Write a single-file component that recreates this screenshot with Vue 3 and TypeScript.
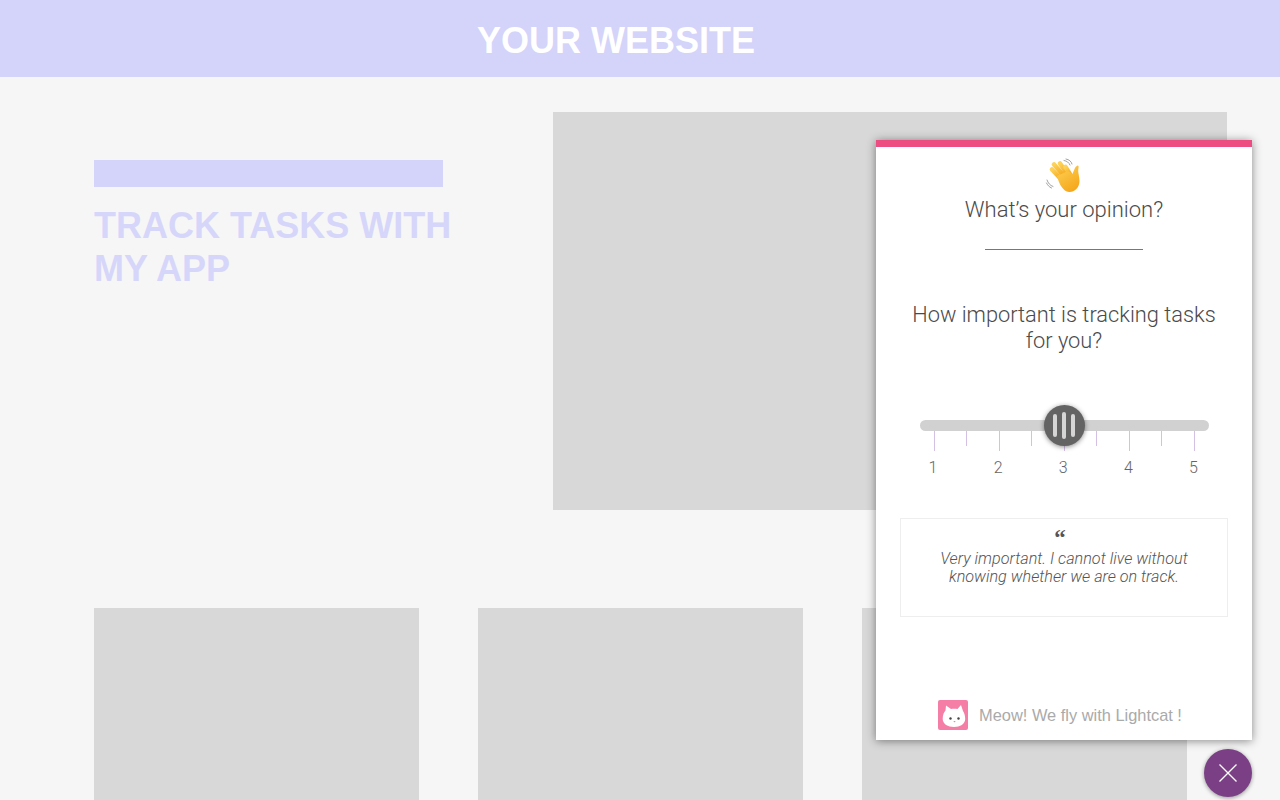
<script setup lang="ts">
const ticks: { major: boolean }[] = [
  { major: true }, { major: false }, { major: true }, { major: false }, { major: true },
  { major: false }, { major: true }, { major: false }, { major: true },
]
const labels: number[] = [1, 2, 3, 4, 5]
const cards: number[] = [1, 2, 3]
</script>

<template>
  <div class="page">
    <header class="site-header">YOUR WEBSITE</header>
    <main class="content">
      <section class="hero">
        <div class="hero-copy">
          <div class="hero-bar"></div>
          <h1 class="hero-title">TRACK TASKS WITH MY APP</h1>
        </div>
        <div class="hero-image"></div>
      </section>
      <section class="cards">
        <div v-for="c in cards" :key="c" class="card"></div>
      </section>
    </main>

    <aside class="panel">
      <div class="panel-stripe"></div>
      <svg class="wave" viewBox="0 0 40 40" width="40" height="40" aria-hidden="true">
        <defs>
          <linearGradient id="hand" x1="0" y1="0" x2="0.6" y2="1">
            <stop offset="0" stop-color="#fdd257" />
            <stop offset="1" stop-color="#f6a81c" />
          </linearGradient>
        </defs>
        <g fill="none" stroke="#8a8a8a" stroke-width="0.8" stroke-linecap="round">
          <path d="M20 4.500 C23 5 25 6.500 26 9" />
          <path d="M22 3 C25 3.500 27.500 5.500 28 8" />
          <path d="M3 24 C4 27 6 29.500 9 30.500" />
          <path d="M2.500 27 C3.500 29 5 31 7.500 32" />
        </g>
        <g fill="none" stroke="url(#hand)" stroke-width="4.600" stroke-linecap="round">
          <path d="M8 13.500 L18 24" />
          <path d="M10 8.500 L21 21" />
          <path d="M16 7.500 L24 19" />
          <path d="M21.500 11 L27 20" />
        </g>
        <path d="M13 20 L24 15 L28.500 18 C30 15 30.500 11 33.500 9.500 C35 9.500 34.800 11.500 34.300 13 C33.600 16 35.500 20 35.500 25 C35.500 32 30 36.500 25 36 C19 35.500 15 28 13 20 Z" fill="url(#hand)" />
      </svg>
      <h2 class="panel-title">What’s your opinion?</h2>
      <div class="panel-rule"></div>
      <p class="question">How important is tracking tasks for you?</p>

      <div class="slider">
        <div class="track"></div>
        <div class="ticks">
          <span v-for="(t, i) in ticks" :key="i" class="tick" :class="{ major: t.major }"></span>
        </div>
        <div class="labels">
          <span v-for="n in labels" :key="n" class="label">{{ n }}</span>
        </div>
        <div class="thumb">
          <span class="grip side"></span>
          <span class="grip"></span>
          <span class="grip side"></span>
        </div>
      </div>

      <div class="quote">
        <div class="quote-mark">“</div>
        <p class="quote-text">Very important. I cannot live without knowing whether we are on track.</p>
      </div>

      <footer class="brand">
        <span class="brand-logo">
          <svg viewBox="0 0 30 30" width="30" height="30" aria-hidden="true">
            <path d="M4.700 19 C4.700 15 6 12 7.500 10.500 L8 5.500 L13 9 C15 8.700 17.500 8.700 19.500 9 L23 5 L25 11 C26.500 13 27.200 16 27.200 19 C27.200 24 22 27 16 27 C10 27 4.700 24 4.700 19 Z" fill="#fff" />
            <circle cx="12.500" cy="18.500" r="1.200" fill="#444" />
            <circle cx="20.500" cy="18.500" r="1.200" fill="#444" />
            <path d="M15.300 21 H17.700 L16.500 22.500 Z" fill="#f47ea6" />
          </svg>
        </span>
        <span class="brand-text">Meow! We fly with Lightcat !</span>
      </footer>
    </aside>

    <button class="fab" type="button" aria-label="Close">
      <svg viewBox="0 0 48 48" width="48" height="48" aria-hidden="true">
        <path d="M15.500 15.500 L32.500 32.500 M32.500 15.500 L15.500 32.500" stroke="#fff" stroke-width="1.300" fill="none" />
      </svg>
    </button>
  </div>
</template>

<style>
html, body { margin: 0; padding: 0; background: #f6f6f6; overflow: hidden; }
</style>

<style scoped>
.page {
  position: relative;
  height: 800px;
  overflow: hidden;
  background: #f6f6f6;
  font-family: "Liberation Sans", Arial, sans-serif;
}
.site-header {
  height: 77px;
  box-sizing: border-box;
  padding-right: 48px;
  background: #d4d3f9;
  color: #fff;
  font-size: 36px;
  font-weight: 700;
  line-height: 82px;
  text-align: center;
}
.content { padding: 35px 53px 0 94px; }
.hero { display: flex; height: 398px; }
.hero-copy { width: 459px; padding-top: 48px; }
.hero-bar { width: 349px; height: 27px; background: #d4d3f9; }
.hero-title {
  margin: 17px 0 0;
  width: 400px;
  color: #d6d6fa;
  font-size: 36px;
  line-height: 43px;
  font-weight: 700;
}
.hero-image { width: 674px; height: 398px; background: #d8d8d8; }
.cards { display: flex; gap: 59px; margin-top: 98px; }
.card { width: 325px; height: 300px; background: #d8d8d8; }

.panel {
  position: absolute;
  left: 876px;
  top: 140px;
  width: 376px;
  height: 600px;
  display: flex;
  flex-direction: column;
  align-items: center;
  background: #fff;
  box-shadow: 0 1px 9px rgba(0, 0, 0, 0.45);
  color: #4a4a4a;
  font-family: Roboto, "Liberation Sans", sans-serif;
  font-weight: 300;
}
.panel-stripe { align-self: stretch; height: 7px; background: #ec4c82; flex: none; }
.wave { display: block; margin-top: 9px; flex: none; }
.panel-title {
  margin: 1px 0 0;
  font-size: 22px;
  font-weight: 300;
  line-height: 26px;
}
.panel-rule { width: 158px; height: 1px; background: #777; margin-top: 26px; flex: none; }
.question {
  margin: 52px 0 0;
  width: 330px;
  font-size: 21.800px;
  line-height: 26px;
  text-align: center;
}
.slider { position: relative; width: 289px; margin-top: 66px; height: 59px; }
.track { height: 11px; border-radius: 6px; background: #d1d1d1; }
.ticks {
  display: flex;
  justify-content: space-between;
  align-items: flex-start;
  margin: 0 13.600px 0 14.400px;
}
.tick { width: 1px; height: 15px; background: #d4c0e4; }
.tick.major { height: 20px; }
.labels {
  display: flex;
  justify-content: space-between;
  margin: 7px 5px 0 3.500px;
  font-size: 16px;
  line-height: 20px;
  color: #666;
}
.label { width: 20px; text-align: center; }
.thumb {
  position: absolute;
  left: 124px;
  top: -15px;
  width: 41px;
  height: 41px;
  display: flex;
  align-items: center;
  justify-content: center;
  gap: 4.500px;
  border-radius: 50%;
  background: #636363;
  box-shadow: 0 1px 5px rgba(0, 0, 0, 0.45);
}
.grip { width: 4.500px; height: 27px; border-radius: 3px; background: #d5d5d5; }
.grip.side { height: 23px; }

.quote {
  box-sizing: border-box;
  width: 328px;
  height: 99px;
  margin-top: 39px;
  border: 1px solid #eee;
  text-align: center;
  flex: none;
}
.quote-mark {
  height: 18px;
  margin-top: 6px;
  padding-right: 8px;
  font-family: "Liberation Serif", serif;
  font-weight: 700;
  font-size: 23px;
  line-height: 26px;
  color: #555;
}
.quote-text {
  margin: 7px auto 0;
  width: 270px;
  font-size: 16.200px;
  line-height: 18px;
  font-style: italic;
  color: #555;
}
.brand {
  display: flex;
  align-items: center;
  gap: 11px;
  margin-top: 83px;
  margin-right: 8px;
  font-family: "Liberation Sans", sans-serif;
  font-weight: 400;
}
.brand-logo { width: 30px; height: 30px; border-radius: 2px; background: #f47ea6; display: block; }
.brand-logo svg { display: block; }
.brand-text { color: #aaa; font-size: 16.400px; }

.fab {
  position: absolute;
  left: 1204px;
  top: 749px;
  width: 48px;
  height: 48px;
  padding: 0;
  border: 0;
  border-radius: 50%;
  background: #7b3f85;
  box-shadow: 0 1px 4px rgba(0, 0, 0, 0.4);
}
.fab svg { display: block; }
</style>
